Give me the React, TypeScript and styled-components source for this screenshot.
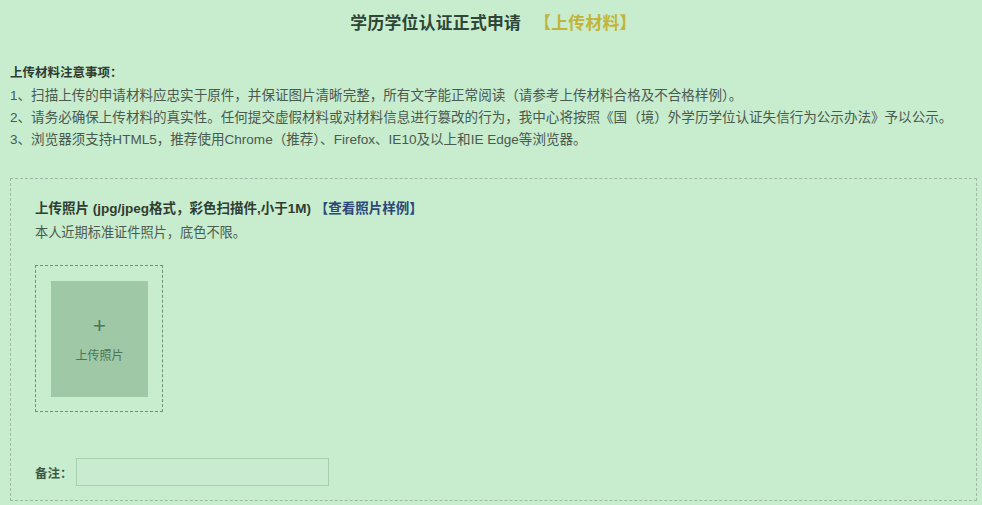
import React from "react";
import styled, { createGlobalStyle } from "styled-components";

const GlobalStyle = createGlobalStyle`
  html, body {
    margin: 0;
    padding: 0;
    background: #c7ecce;
  }
  body {
    font-family: "Liberation Sans", "Noto Sans CJK SC", sans-serif;
    color: #4b5a4e;
  }
`;

const notes = [
  "1、扫描上传的申请材料应忠实于原件，并保证图片清晰完整，所有文字能正常阅读（请参考上传材料合格及不合格样例）。",
  "2、请务必确保上传材料的真实性。任何提交虚假材料或对材料信息进行篡改的行为，我中心将按照《国（境）外学历学位认证失信行为公示办法》予以公示。",
  "3、浏览器须支持HTML5，推荐使用Chrome（推荐）、Firefox、IE10及以上和IE Edge等浏览器。",
];

function App() {
  return (
    <Page>
      <GlobalStyle />
      <Title>
        学历学位认证正式申请
        <Step>【上传材料】</Step>
      </Title>
      <Notes>
        <h3>上传材料注意事项：</h3>
        {notes.map((n) => (
          <p key={n}>{n}</p>
        ))}
      </Notes>
      <UploadPanel>
        <FieldTitle>
          上传照片 (jpg/jpeg格式，彩色扫描件,小于1M) <a>【查看照片样例】</a>
        </FieldTitle>
        <FieldHint>本人近期标准证件照片，底色不限。</FieldHint>
        <PhotoFrame>
          <PhotoButton>
            <span className="plus">+</span>
            <span>上传照片</span>
          </PhotoButton>
        </PhotoFrame>
        <RemarkRow>
          <label>备注：</label>
          <RemarkInput />
        </RemarkRow>
      </UploadPanel>
    </Page>
  );
}

const Page = styled.div`
  width: 982px;
  height: 505px;
  padding: 0 5px 0 10px;
  box-sizing: border-box;
  overflow: hidden;
`;

const Title = styled.h1`
  margin: 0;
  padding-top: 10px;
  height: 34px;
  text-align: center;
  font-size: 16.8px;
  font-weight: bold;
  color: #2f4535;
  letter-spacing: 0.3px;
`;

const Step = styled.span`
  margin-left: 13px;
  color: #c2b43a;
`;

const Notes = styled.div`
  padding-top: 18px;
  font-size: 13.55px;
  line-height: 22px;
  h3 {
    margin: 0 0 1px;
    font-size: 12.5px;
    color: #2f3d33;
  }
  p {
    margin: 0;
    white-space: nowrap;
  }
`;

const UploadPanel = styled.div`
  margin-top: 27px;
  height: 323px;
  box-sizing: border-box;
  border: 1px dashed #9fb9a4;
  padding: 20px 0 0 24px;
`;

const FieldTitle = styled.div`
  font-size: 13.5px;
  font-weight: bold;
  color: #2f3d33;
  line-height: 20px;
  a {
    color: #2d4878;
  }
`;

const FieldHint = styled.div`
  font-size: 13.2px;
  line-height: 20px;
  margin-top: 4px;
`;

const PhotoFrame = styled.div`
  margin-top: 22px;
  width: 128px;
  height: 147px;
  box-sizing: border-box;
  border: 1px dashed #6f8f76;
  padding: 15px;
`;

const PhotoButton = styled.div`
  width: 97px;
  height: 116px;
  background: #9fc8a6;
  display: flex;
  flex-direction: column;
  align-items: center;
  justify-content: center;
  color: #4b7555;
  font-size: 12px;
  .plus {
    font-size: 22px;
    line-height: 22px;
    margin-bottom: 9px;
    font-weight: 300;
  }
`;

const RemarkRow = styled.div`
  margin-top: 46px;
  display: flex;
  align-items: center;
  gap: 3px;
  label {
    font-size: 12.5px;
    font-weight: bold;
    color: #3c5a43;
  }
`;

const RemarkInput = styled.input`
  width: 253px;
  height: 28px;
  box-sizing: border-box;
  border: 1px solid #a6cdac;
  background: #c9ecd0;
  outline: none;
`;

export default App;
